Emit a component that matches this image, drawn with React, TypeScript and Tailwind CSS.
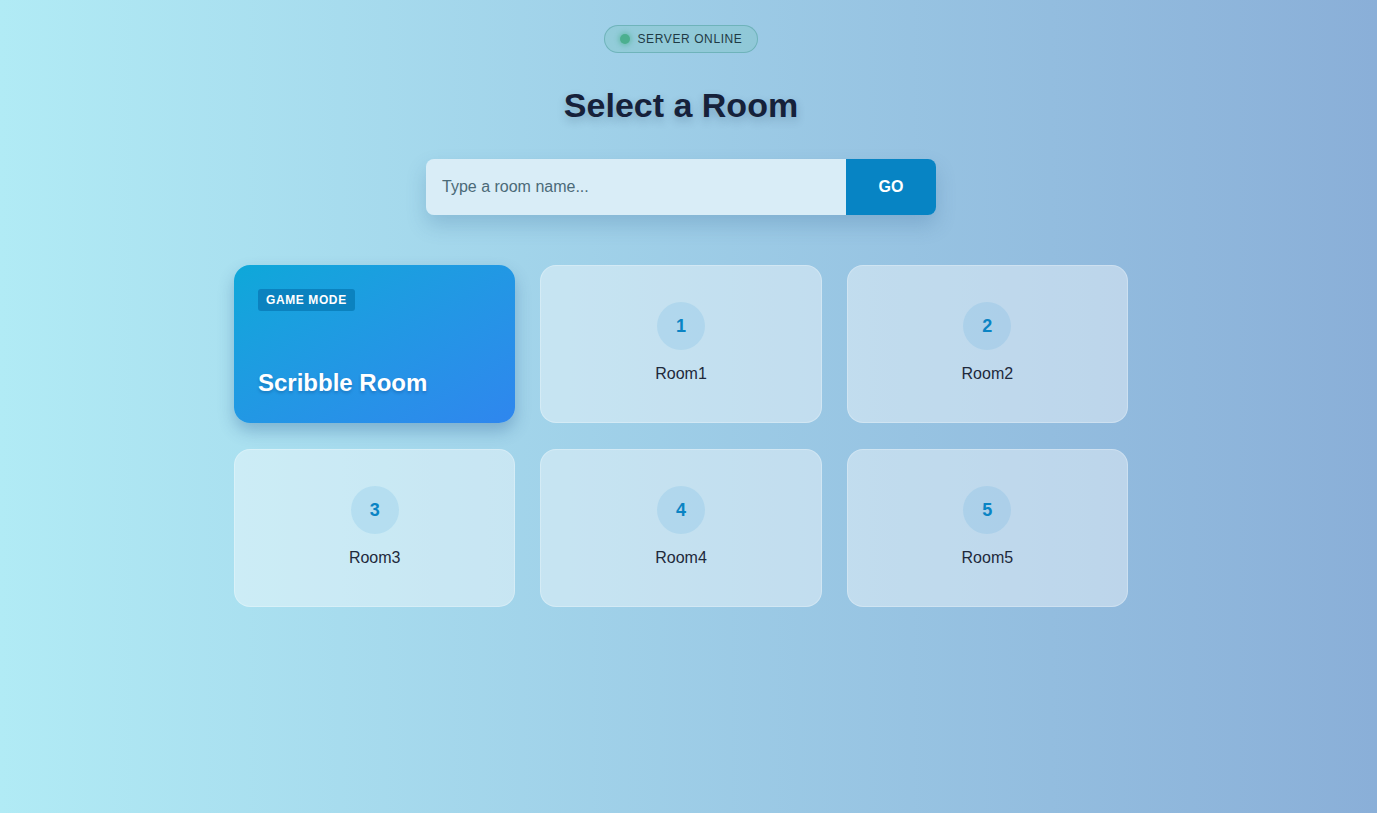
import React from "react";

const rooms = ["Room1", "Room2", "Room3", "Room4", "Room5"];

function RoomCard({ index, name }: { index: number; name: string }) {
  return (
    <button className="flex h-[158px] flex-col items-center justify-center rounded-2xl border border-white/25 bg-white/40 text-slate-800">
      <span className="flex h-12 w-12 items-center justify-center rounded-full bg-sky-600/10 text-lg font-bold text-[#0a84c4]">
        {index}
      </span>
      <span className="mt-3 text-base leading-6 text-[#1e293b]">{name}</span>
    </button>
  );
}

export default function App() {
  return (
    <div
      className="min-h-[813px] w-full bg-gradient-to-r from-[#b1ebf5] to-[#8aafd8] pr-[15px] text-slate-900"
      style={{ fontFamily: '"Liberation Sans", Arial, sans-serif' }}
    >
      <div className="flex flex-col items-center pt-[25px]">
        {/* status pill */}
        <div className="flex h-7 items-center gap-[8px] rounded-full border border-[#5fa9ad]/70 bg-[#7fc6c4]/40 pl-[15px] pr-[15px]">
          <span className="h-[10px] w-[10px] rounded-full bg-[#4caf8f] shadow-[0_0_4px_2px_rgba(76,175,143,0.45)]" />
          <span className="text-[12px] tracking-[0.6px] text-[#1f3a44]">SERVER ONLINE</span>
        </div>

        <h1 className="mt-8 text-[34px] font-bold leading-10 text-[#16213a] [text-shadow:0_4px_8px_rgba(30,60,90,0.25)]">
          Select a Room
        </h1>

        {/* search */}
        <div className="mt-[34px] flex h-14 w-[510px] overflow-hidden rounded-lg shadow-[0_10px_20px_rgba(40,90,140,0.22)]">
          <input
            placeholder="Type a room name..."
            className="h-full flex-1 bg-[#d9edf7] px-4 text-base text-slate-700 outline-none placeholder:text-[#4b6a78]"
          />
          <button className="h-full w-[90px] bg-[#0784c4] text-base font-bold text-white">GO</button>
        </div>

        {/* rooms */}
        <div className="mt-[50px] grid w-[894px] grid-cols-3 gap-x-[25px] gap-y-[26px]">
          <button className="flex h-[158px] flex-col items-start justify-between rounded-2xl bg-gradient-to-br from-[#0da8d9] to-[#2f86ee] p-6 text-left text-white shadow-[0_8px_16px_rgba(30,80,140,0.3)]">
            <span className="rounded-[3px] bg-[#0b82bf] px-2 py-[3px] text-[12px] font-bold leading-4 tracking-[0.6px]">
              GAME MODE
            </span>
            <span className="text-[24px] font-bold leading-8 [text-shadow:0_2px_3px_rgba(0,40,90,0.25)]">
              Scribble Room
            </span>
          </button>
          {rooms.map((r, i) => (
            <RoomCard key={r} index={i + 1} name={r} />
          ))}
        </div>
      </div>
    </div>
  );
}
